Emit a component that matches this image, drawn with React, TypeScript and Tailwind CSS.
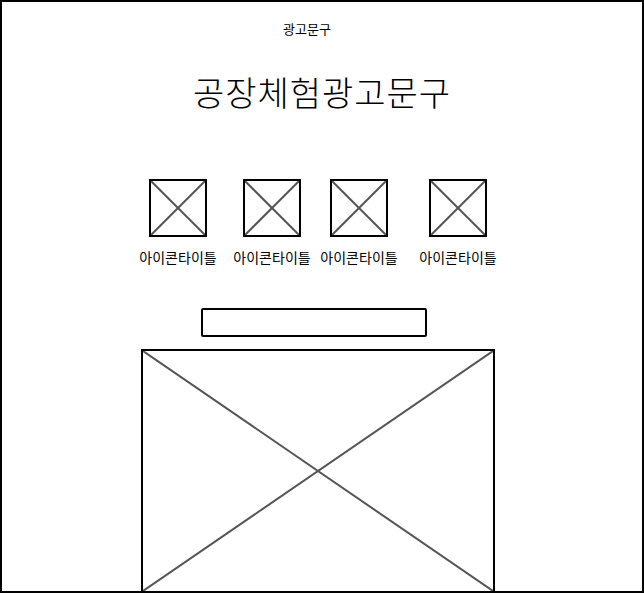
import React from 'react';

const kr = { fontFamily: '"Noto Sans CJK KR", "Noto Sans", sans-serif' };

function Placeholder({ className }: { className: string }) {
  return (
    <div className={`relative border-2 border-black bg-white ${className}`}>
      <svg className="absolute inset-0 h-full w-full" viewBox="0 0 100 100" preserveAspectRatio="none">
        <line x1="0" y1="0" x2="100" y2="100" stroke="#555" strokeWidth="2" vectorEffect="non-scaling-stroke" />
        <line x1="100" y1="0" x2="0" y2="100" stroke="#555" strokeWidth="2" vectorEffect="non-scaling-stroke" />
      </svg>
    </div>
  );
}

const icons = [
  { key: 1, ml: 'ml-[137px]' },
  { key: 2, ml: 'ml-[16px]' },
  { key: 3, ml: 'ml-[9px]' },
  { key: 4, ml: 'ml-[21px]' },
];

export default function App() {
  return (
    <div className="h-[593px] w-[644px] overflow-hidden bg-white" style={kr}>
      <div className="flex h-full flex-col border-2 border-black">
        {/* top copy */}
        <div className="mt-[17px] pl-[281px] text-[13px] leading-[20px] text-black">광고문구</div>

        <h1 className="mt-[33px] text-center text-[34px] font-light leading-[40px] tracking-[1px] text-black">
          공장체험광고문구
        </h1>

        {/* icon row */}
        <div className="mt-[67px] flex">
          {icons.map((it) => (
            <div key={it.key} className={`flex w-[78px] flex-col items-center ${it.ml}`}>
              <Placeholder className="h-[58px] w-[58px]" />
              <div className="mt-[11px] whitespace-nowrap text-[14px] leading-[18px] text-black">아이콘타이틀</div>
            </div>
          ))}
        </div>

        {/* button bar */}
        <div className="ml-[199px] mt-[42px] h-[29px] w-[226px] rounded-[2px] border-2 border-black" />

        {/* main image */}
        <div className="ml-[139px] mt-[12px] flex flex-1">
          <Placeholder className="h-full w-[354px] border-b-0" />
        </div>
      </div>
    </div>
  );
}
